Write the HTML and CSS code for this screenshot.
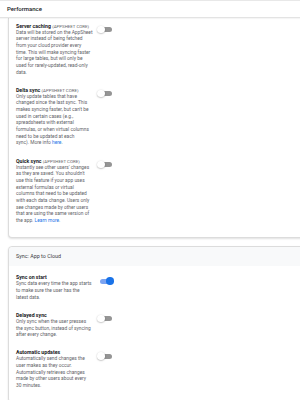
FILE: index.html
```html
<!DOCTYPE html>
<html lang="en">
<head>
    <meta charset="UTF-8">
    <meta name="viewport" content="width=device-width, initial-scale=1.0">
    <title>Performance</title>
    <link rel="stylesheet" href="styles.css">
</head>
<body>
    <div class="topbar">Performance</div>

    <section class="card card-first">
        <div class="setting">
            <div class="setting-text">
                <div class="setting-title">Server caching <span class="tag">(APPSHEET CORE)</span></div>
                <p class="setting-desc">Data will be stored on the AppSheet<br>server instead of being fetched<br>from your cloud provider every<br>time. This will make syncing faster<br>for large tables, but will only be<br>used for rarely-updated, read-only<br>data.</p>
            </div>
            <span class="toggle"></span>
        </div>
        <div class="setting">
            <div class="setting-text">
                <div class="setting-title">Delta sync <span class="tag">(APPSHEET CORE)</span></div>
                <p class="setting-desc">Only update tables that have<br>changed since the last sync. This<br>makes syncing faster, but can't be<br>used in certain cases (e.g.,<br>spreadsheets with external<br>formulas, or when virtual columns<br>need to be updated at each<br>sync). More info <a href="#">here</a>.</p>
            </div>
            <span class="toggle"></span>
        </div>
        <div class="setting">
            <div class="setting-text">
                <div class="setting-title">Quick sync <span class="tag">(APPSHEET CORE)</span></div>
                <p class="setting-desc">Instantly see other users' changes<br>as they are saved. You shouldn't<br>use this feature if your app uses<br>external formulas or virtual<br>columns that need to be updated<br>with each data change. Users only<br>see changes made by other users<br>that are using the same version of<br>the app. <a href="#">Learn more</a>.</p>
            </div>
            <span class="toggle"></span>
        </div>
    </section>

    <section class="card">
        <div class="card-header">Sync: App to Cloud</div>
        <div class="card-body">
            <div class="setting">
                <div class="setting-text">
                    <div class="setting-title">Sync on start</div>
                    <p class="setting-desc">Sync data every time the app starts<br>to make sure the user has the<br>latest data.</p>
                </div>
                <span class="toggle on"></span>
            </div>
            <div class="setting">
                <div class="setting-text">
                    <div class="setting-title">Delayed sync</div>
                    <p class="setting-desc">Only sync when the user presses<br>the sync button, instead of syncing<br>after every change.</p>
                </div>
                <span class="toggle"></span>
            </div>
            <div class="setting">
                <div class="setting-text">
                    <div class="setting-title">Automatic updates</div>
                    <p class="setting-desc">Automatically send changes the<br>user makes as they occur.<br>Automatically retrieves changes<br>made by other users about every<br>30 minutes.</p>
                </div>
                <span class="toggle"></span>
            </div>
        </div>
    </section>
</body>
</html>
```

FILE: styles.css
```css
body {
    margin: 0;
    background: #fff;
    font-family: Roboto, "Liberation Sans", sans-serif;
    color: #202124;
    overflow: hidden;
}
.topbar {
    height: 16px;
    line-height: 16px;
    padding-left: 7px;
    font-size: 6px;
    font-weight: 500;
    border-top: 1px solid #e8e8e8;
    border-bottom: 1px solid #e3e3e3;
    box-shadow: 0 1px 1px rgba(0,0,0,0.04);
    position: relative;
    z-index: 1;
}
.card {
    margin: 0 -20px 8px 8px;
    border: 1px solid #dcdcdc;
    border-radius: 4px;
    box-shadow: 0 1px 2px rgba(0,0,0,0.12);
    background: #fff;
}
.card-first {
    border-top: none;
    border-radius: 0 0 4px 4px;
    padding: 4.5px 0 12px 7px;
}
.card-header {
    height: 19px;
    line-height: 19px;
    padding-left: 7px;
    font-size: 5.4px;
    color: #3c4043;
    background: #f8f9fa;
    border-radius: 4px 4px 0 0;
}
.card-body {
    padding: 8.8px 0 12px 7px;
}
.setting {
    display: flex;
    align-items: flex-start;
    margin-bottom: 10.5px;
}
.setting:last-child {
    margin-bottom: 0;
}
.setting-text {
    width: 78px;
    white-space: nowrap;
}
.setting-title {
    font-size: 5.2px;
    line-height: 7px;
    font-weight: bold;
}
.tag {
    font-size: 4.4px;
    font-weight: normal;
    color: #5f6368;
}
.setting-desc {
    margin: 0;
    font-size: 4.85px;
    line-height: 6.67px;
    color: #5f6368;
}
.setting-desc a {
    color: #1a73e8;
    text-decoration: none;
}
.toggle {
    position: relative;
    width: 16px;
    height: 7.5px;
    margin: 3px 0 0 3px;
}
.toggle::before {
    content: "";
    position: absolute;
    left: 3px;
    top: 1.3px;
    width: 12px;
    height: 5px;
    border-radius: 3px;
    background: #959595;
}
.toggle::after {
    content: "";
    position: absolute;
    left: 0;
    top: 0;
    width: 7.5px;
    height: 7.5px;
    border-radius: 50%;
    background: #fff;
    box-shadow: 0 0.5px 1.5px rgba(0,0,0,0.35);
}
.toggle.on::before {
    background: #7ba3f1;
}
.toggle.on::after {
    left: 9px;
    background: #1a73e8;
    box-shadow: none;
}
```
